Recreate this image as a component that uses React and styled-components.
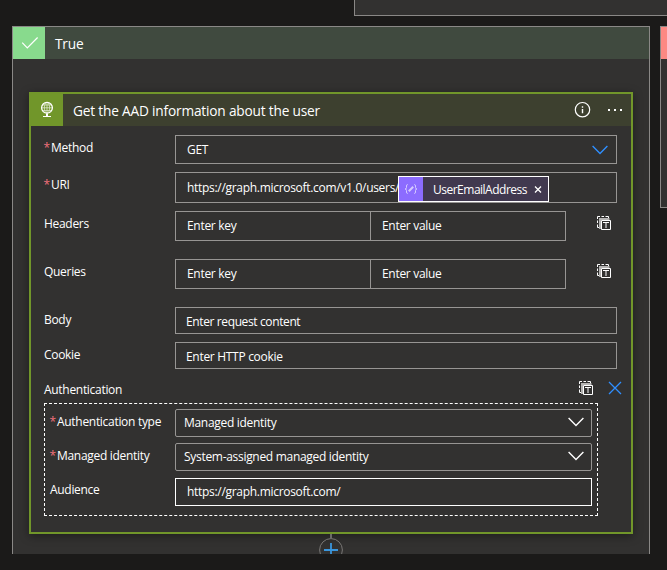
import React from 'react'
import styled, {createGlobalStyle, css} from 'styled-components'

const GlobalStyle = createGlobalStyle`
    * {
        box-sizing: border-box;
    }
    body {
        margin: 0;
        background: #1b1a19;
    }
`

const borderGray = '#979593'
const cardBackground = '#323130'

const Designer = styled.div`
    width: 667px;
    height: 570px;
    overflow: hidden;
    background: #1b1a19;
    color: #ffffff;
    font-family: "Open Sans", "Noto Sans", sans-serif;
    font-size: 12px;
    line-height: 16px;
    letter-spacing: -.3px;
    white-space: nowrap;
`

const ConditionCard = styled.div`
    height: 16px;
    margin-left: 354px;
    background: ${cardBackground};
    border: solid #8a8886;
    border-width: 0 0 1px 1px;
`

const Branches = styled.div`
    display: flex;
    align-items: flex-start;
    gap: 10px;
    height: 528px;
    margin-top: 10px;
    padding-left: 12px;
    overflow: hidden;
`

const Branch = styled.section`
    flex: none;
    display: flex;
    flex-direction: column;
    align-items: center;
    width: 638px;
    height: ${props => props.$height}px;
    background: ${cardBackground};
    border: 1px solid #8a8886;
`

const BranchHeader = styled.header`
    display: flex;
    align-items: center;
    flex: none;
    width: 100%;
    height: 32px;
    margin-bottom: 33px;
    background: #404a3f;
    ${props => props.$negative && css`
        background: #5a403f;
    `}
`

const BranchIcon = styled.div`
    width: 32px;
    height: 32px;
    margin-right: 10px;
    background: #88da8d;
    ${props => props.$negative && css`
        background: #fc8983;
    `}
`

const Title = styled.h2`
    margin: 0;
    padding-top: 1px;
    font-size: 13.7px;
    font-weight: 400;
    line-height: 18px;
    letter-spacing: -.19px;
`

const ActionCard = styled.article`
    flex: none;
    width: 604px;
    height: 442px;
    background: ${cardBackground};
    border: 2px solid #71962a;
    box-shadow: 0 2px 9px rgba(0, 0, 0, .4);
`

const ActionHeader = styled.header`
    display: flex;
    align-items: center;
    height: 32px;
    padding-right: 7px;
    background: #3d402f;
`

const ActionIcon = styled.div`
    width: 32px;
    height: 32px;
    margin-right: 10px;
    background: #71962a;
`

const HeaderTools = styled.div`
    display: flex;
    gap: 15px;
    margin-left: auto;
`

const ActionBody = styled.div`
    padding: 9px 0 0 13px;
`

const Row = styled.div`
    display: flex;
    align-items: flex-start;
    height: ${props => props.$height}px;
    margin-bottom: ${props => props.$gap}px;
`

const Label = styled.label`
    flex: none;
    width: ${props => props.$width || 131}px;
    padding-top: ${props => props.$top}px;
`

const Star = styled.span`
    display: inline-block;
    width: 7px;
    color: #f1707b;
    letter-spacing: 0;
    text-indent: -.5px;
`

const Field = styled.div`
    display: flex;
    align-items: center;
    width: ${props => props.$width || 442}px;
    height: 100%;
    padding: ${props => props.$drop || 0}px 8px 0 ${props => props.$indent || 11}px;
    border: 1px solid ${borderGray};
    letter-spacing: ${props => props.$spacing || -.3}px;
    > svg {
        margin-left: auto;
    }
    ${props => props.$bright && css`
        border-color: #ffffff;
    `}
`

const SelectField = styled(Field)`
    padding-right: 7px;
    border-radius: 2px;
    > svg {
        margin-bottom: 2px;
    }
`

const UriField = styled(Field)`
    align-items: flex-end;
    padding-right: 0;
`

const UriText = styled.span`
    flex: none;
    width: 211px;
    padding-bottom: 6px;
`

const Token = styled.span`
    display: flex;
    flex: none;
    align-items: center;
    width: 151px;
    height: 26px;
    background: #41394f;
    border: 1px solid #ffffff;
    letter-spacing: -.5px;
`

const TokenIcon = styled.span`
    width: 24px;
    height: 24px;
    margin-right: 10px;
    background: #8c6cff;
`

const TokenName = styled.span`
    width: 101px;
    padding-top: 2px;
`

const PairField = styled.div`
    display: grid;
    grid-template-columns: 194px 1fr;
    width: 391px;
    height: 30px;
    margin-right: 31px;
    border: 1px solid ${borderGray};
`

const PairCell = styled.div`
    display: flex;
    align-items: center;
    padding-left: 11px;
    & + & {
        border-left: 1px solid ${borderGray};
    }
`

const IconButton = styled.div`
    padding-top: ${props => props.$top || 0}px;
    line-height: 0;
`

const AuthHeader = styled.div`
    display: flex;
    height: 34px;
    padding-top: 12px;
`

const AuthTools = styled.div`
    display: flex;
    gap: 14px;
    margin-left: auto;
    padding-right: 9px;
`

const AuthBox = styled.div`
    width: 554px;
    height: 113px;
    padding: 5px 0 0 5px;
    border: 1px dashed #ffffff;
`

const Connector = styled.div`
    flex: none;
    width: 2px;
    height: 4px;
    background: #6b6a69;
`

function CheckIcon() {
    return (
        <svg width="32" height="32" fill="none" stroke="#fff" strokeWidth="1.2">
            <path d="M9.2 15.7 L14.3 20.8 L24.6 10.5" />
        </svg>
    )
}

function GlobeIcon() {
    return (
        <svg width="32" height="32" fill="none" stroke="#fff">
            <circle cx="16" cy="13.8" r="5.4" strokeWidth="1.3" />
            <g strokeWidth=".7" opacity=".85">
                <ellipse cx="16" cy="13.8" rx="2.6" ry="5.4" />
                <path d="M10.6 13.8 H21.4 M11.3 11 H20.7 M11.3 16.6 H20.7 M16 8.4 V19" />
            </g>
            <path d="M16 19.5 V22" strokeWidth="2" />
            <path d="M12 22.5 H20" />
        </svg>
    )
}

function InfoIcon() {
    return (
        <svg width="18" height="18" fill="none" stroke="#fff">
            <circle cx="9.5" cy="8.7" r="7.2" strokeWidth="1.2" />
            <path d="M9.5 8 V12.3 M9.5 5.3 V6.8" strokeWidth="1.4" />
        </svg>
    )
}

function MoreIcon() {
    return (
        <svg width="18" height="18" fill="#fff">
            <path d="M2 8h2v2h-2z M8 8h2v2h-2z M14 8h2v2h-2z" />
        </svg>
    )
}

function Chevron({color = '#fff'}) {
    return (
        <svg width="16" height="10" fill="none" stroke={color} strokeWidth="1.4">
            <path d="M.6 1 L8 8.4 L15.4 1" />
        </svg>
    )
}

function SwitchIcon() {
    return (
        <svg width="15" height="15" fill="none">
            <path d="M.5 3V.5H3 M4.5 .5H7 M8.5 .5H11.5V2 M.5 4.5V7 M.5 8.5V11.5H2" stroke="#fff" />
            <path d="M3 13V3H12.5" stroke="#b5b4b3" strokeWidth="2" />
            <path d="M4.5 4.5H13.5V13.5H4.5Z M6 6.5H12 M9 6.5V12" stroke="#fff" />
        </svg>
    )
}

function CloseIcon() {
    return (
        <svg width="14" height="14" stroke="#2f8fff" strokeWidth="1.3">
            <path d="M1 1 L13 13 M13 1 L1 13" />
        </svg>
    )
}

function ExpressionIcon() {
    return (
        <svg width="24" height="24" fill="none" stroke="#d6caff">
            <path d="M8.7 7.5 Q7.5 7.5 7.5 9 V10.5 Q7.5 12 6 12 Q7.5 12 7.5 13.5 V15 Q7.5 16.5 8.7 16.5" />
            <path d="M15.3 7.5 Q16.5 7.5 16.5 9 V10.5 Q16.5 12 18 12 Q16.5 12 16.5 13.5 V15 Q16.5 16.5 15.3 16.5" />
            <path d="M9.8 14.2 L14.2 9.8" strokeWidth="2" />
        </svg>
    )
}

function TokenClose() {
    return (
        <svg width="8" height="8" stroke="#fff" strokeWidth="1.3">
            <path d="M1 1.5 L7 7.5 M7 1.5 L1 7.5" />
        </svg>
    )
}

function AddStep() {
    return (
        <svg width="24" height="24" fill="none">
            <circle cx="12" cy="12" r="11.4" stroke="#797775" />
            <path d="M12 5 V19 M5 12 H19" stroke="#3a96dd" strokeWidth="1.8" />
        </svg>
    )
}

function PairRow({name}) {
    return (
        <Row $height={30} $gap={18}>
            <Label $top={5}>{name}</Label>
            <PairField>
                <PairCell>Enter key</PairCell>
                <PairCell>Enter value</PairCell>
            </PairField>
            <IconButton $top={5}><SwitchIcon /></IconButton>
        </Row>
    )
}

function Authentication() {
    return (
        <>
            <AuthHeader>
                <Label $top={1}>Authentication</Label>
                <AuthTools>
                    <IconButton><SwitchIcon /></IconButton>
                    <IconButton><CloseIcon /></IconButton>
                </AuthTools>
            </AuthHeader>
            <AuthBox>
                <Row $height={28} $gap={6}>
                    <Label $width={125} $top={5}><Star>*</Star>Authentication type</Label>
                    <SelectField $width={417} $indent={8}>Managed identity<Chevron /></SelectField>
                </Row>
                <Row $height={28} $gap={7}>
                    <Label $width={125} $top={5}><Star>*</Star>Managed identity</Label>
                    <SelectField $width={417} $indent={8}>System-assigned managed identity<Chevron /></SelectField>
                </Row>
                <Row $height={28} $gap={0}>
                    <Label $width={125} $top={4}>Audience</Label>
                    <Field $width={417} $bright>https://graph.microsoft.com/</Field>
                </Row>
            </AuthBox>
        </>
    )
}

function HttpAction() {
    return (
        <ActionCard>
            <ActionHeader>
                <ActionIcon><GlobeIcon /></ActionIcon>
                <Title>Get the AAD information about the user</Title>
                <HeaderTools>
                    <InfoIcon />
                    <MoreIcon />
                </HeaderTools>
            </ActionHeader>
            <ActionBody>
                <Row $height={29} $gap={8}>
                    <Label $top={5}><Star>*</Star>Method</Label>
                    <Field $drop={1}>GET<Chevron color="#2f8fff" /></Field>
                </Row>
                <Row $height={31} $gap={8}>
                    <Label $top={5}><Star>*</Star>URI</Label>
                    <UriField>
                        <UriText>https://graph.microsoft.com/v1.0/users/</UriText>
                        <Token>
                            <TokenIcon><ExpressionIcon /></TokenIcon>
                            <TokenName>UserEmailAddress</TokenName>
                            <TokenClose />
                        </Token>
                    </UriField>
                </Row>
                <PairRow name="Headers" />
                <PairRow name="Queries" />
                <Row $height={27} $gap={8}>
                    <Label $top={5}>Body</Label>
                    <Field $indent={10} $drop={2} $spacing={-.38}>Enter request content</Field>
                </Row>
                <Row $height={27} $gap={0}>
                    <Label $top={5}>Cookie</Label>
                    <Field $indent={10} $drop={2}>Enter HTTP cookie</Field>
                </Row>
                <Authentication />
            </ActionBody>
        </ActionCard>
    )
}

export default function App() {
    return (
        <Designer>
            <GlobalStyle />
            <ConditionCard />
            <Branches>
                <Branch $height={560}>
                    <BranchHeader>
                        <BranchIcon><CheckIcon /></BranchIcon>
                        <Title>True</Title>
                    </BranchHeader>
                    <HttpAction />
                    <Connector />
                    <AddStep />
                </Branch>
                <Branch $height={182}>
                    <BranchHeader $negative>
                        <BranchIcon $negative />
                    </BranchHeader>
                </Branch>
            </Branches>
        </Designer>
    )
}
